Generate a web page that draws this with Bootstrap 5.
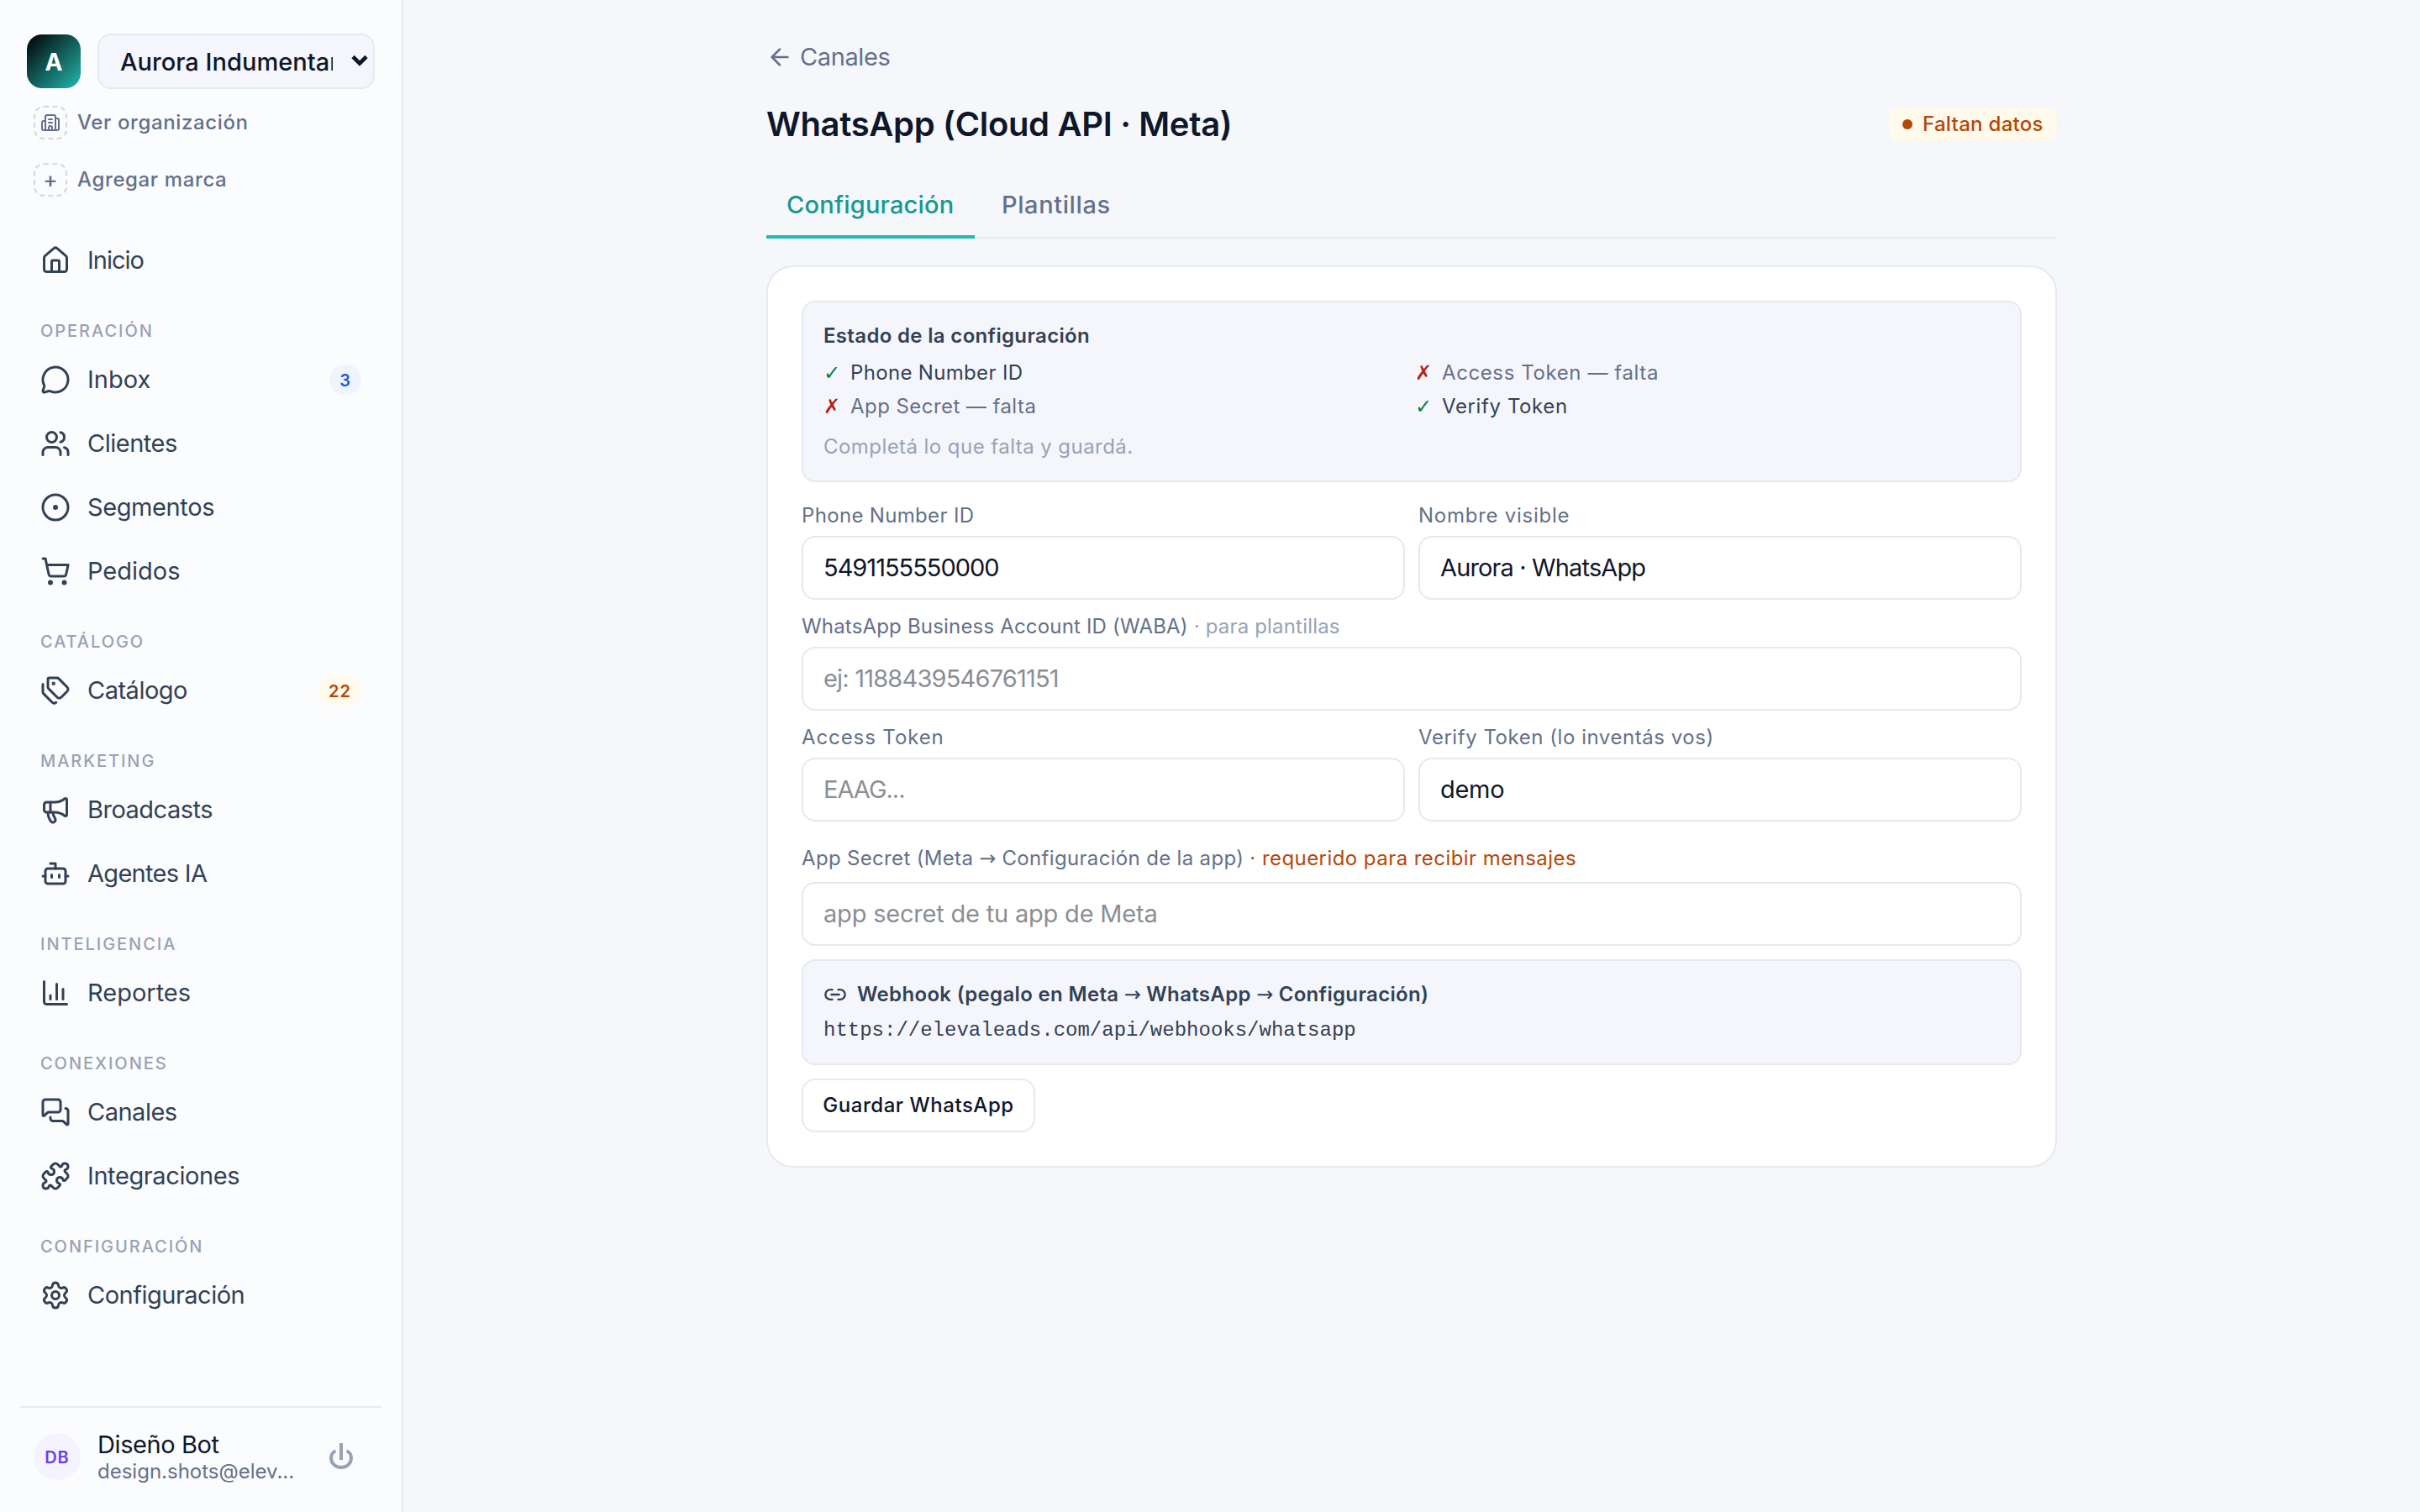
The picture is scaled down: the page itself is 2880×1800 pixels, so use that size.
<!DOCTYPE html>
<html lang="es">
<head>
<meta charset="utf-8">
<title>WhatsApp (Cloud API · Meta)</title>
<link rel="stylesheet" href="https://cdn.jsdelivr.net/npm/bootstrap@5.3.0/dist/css/bootstrap.min.css">
<style>
:root{--ink:#0f172a;--ink2:#334155;--mut:#64708a;--faint:#98a2b5;--line:#e6e9f0;--soft:#f5f6fb}
body{font-family:Inter,"Liberation Sans",sans-serif;font-size:29px;line-height:1.5;color:var(--ink);background:#f5f7fb;height:1800px;overflow:hidden}
svg{fill:none;stroke:currentColor;stroke-width:2;stroke-linecap:round;stroke-linejoin:round;flex:none;display:block}
/* tracking steps */
.tr-n10{letter-spacing:-1px}.tr-n9{letter-spacing:-.86px}.tr-n8{letter-spacing:-.8px}.tr-n7{letter-spacing:-.7px}.tr-n5{letter-spacing:-.5px}.tr-n4{letter-spacing:-.4px}.tr-n3{letter-spacing:-.3px}.tr-n2{letter-spacing:-.2px}
.tr-2{letter-spacing:.18px}.tr-3{letter-spacing:.33px}.tr-4{letter-spacing:.44px}.tr-5{letter-spacing:.54px}.tr-6{letter-spacing:.6px}.tr-7{letter-spacing:.75px}.tr-9{letter-spacing:.9px}
.side{width:480px;height:1800px;background:#fbfcfe;border-right:2px solid var(--line);padding:40px 24px 0}
.brandrow{height:66px;padding:0 8px;gap:20px}
.logo{width:64px;height:64px;border-radius:18px;background:linear-gradient(135deg,#000 0%,#22b8b0 100%);color:#fff;font-weight:700;font-size:28px;padding-top:2px}
.brandsel{width:330px;height:66px;border:2px solid var(--line);border-radius:16px;background:var(--soft);padding-left:25px;font-weight:500}
.brandsel span{width:253px;overflow:hidden;white-space:nowrap;padding-top:2px;letter-spacing:.02px}
.brandsel svg{margin-left:22px;stroke-width:4.6;stroke-linecap:butt;stroke-linejoin:miter;margin-bottom:3px}
.mini{height:68px;padding-left:16px;gap:12px;color:var(--mut);font-size:24px;font-weight:500;letter-spacing:.62px}
.mini i{width:40px;height:40px;border:2px dashed #d2d7e1;border-radius:12px;font-style:normal}
.mini .plus{font-size:26px;letter-spacing:0;line-height:1}
.minis{padding-top:6px;height:166px}
.navi{height:76px;padding:0 24px;gap:20px;color:var(--ink2)}
.sect{height:66px;padding:25px 24px 0;font-size:20px;line-height:42px;font-weight:500;letter-spacing:1.95px;color:var(--faint)}
.cnt{height:36px;border-radius:18px;font-size:20px;font-weight:600;padding:0 12px;letter-spacing:1px;line-height:38px}
.c-blue{background:#eff4ff;color:#1d5bd8}
.c-amb{background:#fffaeb;color:#b54708}
.userbar{height:126px;border-top:2px solid var(--line);padding:0 16px;margin-top:94px}
.ava{width:56px;height:56px;margin-top:30px;border-radius:50%;background:#f5f3ff;color:#6d3bf0;font-size:20px;font-weight:600;letter-spacing:1px;padding-top:2px}
.who{margin:22px 0 0 20px;width:270px;line-height:44px}
.mail{font-size:24px;line-height:32px;margin-top:-6px;color:var(--mut)}
.pwr{margin:41px 0 0 5px;color:#98a2b5;stroke-width:4;stroke-linecap:butt}
.wrapc{width:1536px;margin:0 auto}
.back{height:44px;margin-top:46px;gap:8px;color:var(--mut)}
.ttl{font-size:40px;line-height:60px;font-weight:600;margin:0;letter-spacing:-.34px}
.ttlrow{height:60px;margin-top:28px}
.pill{width:200px;height:40px;border-radius:12px;padding:0 0 0 16px;gap:12px;font-size:24px;font-weight:500;letter-spacing:.3px}
.pill b{width:12px;height:12px;border-radius:50%;background:#b54708}
.tabsx{height:80px;margin-top:26px;border-bottom:2px solid var(--line);gap:8px;font-weight:500;color:var(--mut)}
.tabsx div{height:80px;line-height:80px;padding:0 24px}
.tabsx .on{color:#179890;border-bottom:4px solid #24b8b0;width:248px;letter-spacing:.22px}
.panel{margin-top:32px;height:1074px;background:#fff;border:2px solid var(--line);border-radius:32px;padding:40px}
.boxx{border:2px solid var(--line);border-radius:16px;background:var(--soft);padding:0 24px;font-size:24px;color:var(--ink2)}
.sb{font-weight:600}
.dj{font-family:"DejaVu Sans",sans-serif;letter-spacing:0}
.status{height:216px;padding-top:20px}
.status .l{line-height:40px;height:40px}
.status .g{width:32px;flex:none;font-family:"DejaVu Sans",sans-serif;letter-spacing:0}
.checks{margin-top:4px}
.hint{margin-top:8px;color:var(--faint)}
.cols{display:grid;grid-template-columns:1fr 1fr;column-gap:8px}
.no{color:var(--mut)} .okc{color:#0a8048} .noc{color:#b42318}
.lab{font-size:24px;line-height:36px;color:var(--mut);margin:0;display:block}
.opt{color:var(--faint)} .req{color:#b54708}
.inp{display:block;width:100%;height:76px;border:2px solid var(--line);border-radius:16px;background:#fff;padding:0 24px 2px;font-size:29px;color:var(--ink);font-family:inherit;line-height:40px}
.inp::placeholder{color:#8b8e95;opacity:1}
.pair{display:grid;grid-template-columns:1fr 1fr;column-gap:16px}
.f1{padding-top:22px}.f1 .inp{margin-top:6px}
.f2{padding-top:14px}.f2 .inp{margin-top:6px}
.f3{padding-top:26px}.f3 .inp{margin-top:10px}
.hook{height:126px;margin-top:16px;padding-top:20px}
.hook .hd{gap:12px;line-height:40px;height:40px}
.hook .mono{font-family:"Liberation Mono",monospace;line-height:40px;padding-top:3px}
.save{width:278px;height:64px;margin-top:16px;border:2px solid var(--line);border-radius:16px;background:#fff;font-size:24px;font-weight:500;color:var(--ink);padding:0}
</style>
</head>
<body>
<div class="d-flex">
<aside class="side flex-shrink-0">
  <div class="brandrow d-flex align-items-center">
    <div class="logo d-flex align-items-center justify-content-center">A</div>
    <div class="brandsel d-flex align-items-center"><span>Aurora Indumentaria</span>
      <svg width="20" height="14" viewBox="0 0 20 14"><path d="M2 2.5L10 10.5L18 2.5"/></svg></div>
  </div>
  <div class="minis">
    <div class="mini d-flex align-items-center"><i class="d-flex align-items-center justify-content-center"><svg width="24" height="24" viewBox="0 0 24 24"><path d="M10 12h4M10 8h4M14 21v-3a2 2 0 0 0-4 0v3M6 10H4a2 2 0 0 0-2 2v7a2 2 0 0 0 2 2h16a2 2 0 0 0 2-2V9a2 2 0 0 0-2-2h-2M6 21V5a2 2 0 0 1 2-2h8a2 2 0 0 1 2 2v16"/></svg></i>Ver organización</div>
    <div class="mini d-flex align-items-center"><i class="plus d-flex align-items-center justify-content-center">+</i>Agregar marca</div>
  </div>
  <nav>
    <div class="navi d-flex align-items-center tr-n10"><svg width="36" height="36" viewBox="0 0 24 24"><path d="M15 21v-8a1 1 0 0 0-1-1h-4a1 1 0 0 0-1 1v8"/><path d="M3 10a2 2 0 0 1 .709-1.528l7-5.999a2 2 0 0 1 2.582 0l7 5.999A2 2 0 0 1 21 10v9a2 2 0 0 1-2 2H5a2 2 0 0 1-2-2z"/></svg>Inicio</div>
    <div class="sect">OPERACIÓN</div>
    <div class="navi d-flex align-items-center"><svg width="36" height="36" viewBox="0 0 24 24"><path d="M2.992 16.342a2 2 0 0 1 .094 1.167l-1.065 3.29a1 1 0 0 0 1.236 1.168l3.413-.998a2 2 0 0 1 1.099.092 10 10 0 1 0-4.777-4.719"/></svg>Inbox<span class="cnt c-blue ms-auto">3</span></div>
    <div class="navi d-flex align-items-center tr-n5"><svg width="36" height="36" viewBox="0 0 24 24"><path d="M16 21v-2a4 4 0 0 0-4-4H6a4 4 0 0 0-4 4v2M16 3.128a4 4 0 0 1 0 7.744M22 21v-2a4 4 0 0 0-3-3.87"/><circle cx="9" cy="7" r="4"/></svg>Clientes</div>
    <div class="navi d-flex align-items-center tr-n4"><svg width="36" height="36" viewBox="0 0 24 24"><circle cx="12" cy="12" r="10"/><circle cx="12" cy="12" r="1"/></svg>Segmentos</div>
    <div class="navi d-flex align-items-center"><svg width="36" height="36" viewBox="0 0 24 24"><circle cx="8" cy="21" r="1"/><circle cx="19" cy="21" r="1"/><path d="M2.05 2.05h2l2.66 12.42a2 2 0 0 0 2 1.58h9.78a2 2 0 0 0 1.95-1.57l1.65-7.43H5.12"/></svg>Pedidos</div>
    <div class="sect">CATÁLOGO</div>
    <div class="navi d-flex align-items-center tr-n5"><svg width="36" height="36" viewBox="0 0 24 24"><path d="M13.172 2a2 2 0 0 1 1.414.586l6.71 6.71a2.4 2.4 0 0 1 0 3.408l-4.592 4.592a2.4 2.4 0 0 1-3.408 0l-6.71-6.71A2 2 0 0 1 6 9.172V3a1 1 0 0 1 1-1z"/><path d="M2 7v6.172a2 2 0 0 0 .586 1.414l6.71 6.71a2.4 2.4 0 0 0 3.191.193"/><circle cx="10.5" cy="6.5" r=".5" fill="currentColor"/></svg>Catálogo<span class="cnt c-amb ms-auto">22</span></div>
    <div class="sect">MARKETING</div>
    <div class="navi d-flex align-items-center tr-n5"><svg width="36" height="36" viewBox="0 0 24 24"><path d="M11 6a13 13 0 0 0 8.4-2.8A1 1 0 0 1 21 4v12a1 1 0 0 1-1.6.8A13 13 0 0 0 11 14H5a2 2 0 0 1-2-2V8a2 2 0 0 1 2-2z"/><path d="M6 14a12 12 0 0 0 2.4 7.2 2 2 0 0 0 3.2-2.4A8 8 0 0 1 10 14M8 6v8"/></svg>Broadcasts</div>
    <div class="navi d-flex align-items-center tr-n7"><svg width="36" height="36" viewBox="0 0 24 24"><path d="M12 8V4H8M2 14h2M20 14h2M15 13v2M9 13v2"/><rect x="4" y="8" width="16" height="12" rx="2"/></svg>Agentes IA</div>
    <div class="sect">INTELIGENCIA</div>
    <div class="navi d-flex align-items-center"><svg width="36" height="36" viewBox="0 0 24 24"><path d="M3 3v16a2 2 0 0 0 2 2h16M18 17V9M13 17V5M8 17v-3"/></svg>Reportes</div>
    <div class="sect">CONEXIONES</div>
    <div class="navi d-flex align-items-center tr-n5"><svg width="36" height="36" viewBox="0 0 24 24"><path d="M16 10a2 2 0 0 1-2 2H6.828a2 2 0 0 0-1.414.586l-2.202 2.202A.71.71 0 0 1 2 14.286V4a2 2 0 0 1 2-2h10a2 2 0 0 1 2 2z"/><path d="M20 9a2 2 0 0 1 2 2v10.286a.71.71 0 0 1-1.212.502l-2.202-2.202A2 2 0 0 0 17.172 19H10a2 2 0 0 1-2-2v-1"/></svg>Canales</div>
    <div class="navi d-flex align-items-center tr-n4"><svg width="36" height="36" viewBox="0 0 24 24"><path d="M15.39 4.39a1 1 0 0 0 1.68-.474 2.5 2.5 0 1 1 3.014 3.015 1 1 0 0 0-.474 1.68l1.683 1.682a2.414 2.414 0 0 1 0 3.414L19.61 15.39a1 1 0 0 1-1.68-.474 2.5 2.5 0 1 0-3.014 3.015 1 1 0 0 1 .474 1.68l-1.683 1.682a2.414 2.414 0 0 1-3.414 0L8.61 19.61a1 1 0 0 0-1.68.474 2.5 2.5 0 1 1-3.014-3.015 1 1 0 0 0 .474-1.68l-1.683-1.682a2.414 2.414 0 0 1 0-3.414L4.39 8.61a1 1 0 0 1 1.68.474 2.5 2.5 0 1 0 3.014-3.015 1 1 0 0 1-.474-1.68l1.683-1.682a2.414 2.414 0 0 1 3.414 0z"/></svg>Integraciones</div>
    <div class="sect">CONFIGURACIÓN</div>
    <div class="navi d-flex align-items-center tr-n5"><svg width="36" height="36" viewBox="0 0 24 24"><path d="M9.671 4.136a2.34 2.34 0 0 1 4.659 0 2.34 2.34 0 0 0 3.319 1.915 2.34 2.34 0 0 1 2.33 4.033 2.34 2.34 0 0 0 0 3.831 2.34 2.34 0 0 1-2.33 4.033 2.34 2.34 0 0 0-3.319 1.915 2.34 2.34 0 0 1-4.659 0 2.34 2.34 0 0 0-3.32-1.915 2.34 2.34 0 0 1-2.33-4.033 2.34 2.34 0 0 0 0-3.831A2.34 2.34 0 0 1 6.35 6.051a2.34 2.34 0 0 0 3.319-1.915"/><circle cx="12" cy="12" r="3"/></svg>Configuración</div>
  </nav>
  <div class="userbar d-flex">
    <div class="ava d-flex align-items-center justify-content-center flex-shrink-0">DB</div>
    <div class="who"><div class="tr-n4">Diseño Bot</div><div class="mail text-nowrap">design.shots@elev...</div></div>
    <svg class="pwr" width="30" height="34" viewBox="0 0 30 34"><path d="M15 1v20M8.500 10.500C5 11.500 3 15 3 18.500C3 25 8 30 15 30S27 25 27 18.500C27 15 25 11.500 21.500 10.500"/></svg>
  </div>
</aside>
<main class="flex-grow-1">
  <div class="wrapc">
    <div class="back d-flex align-items-center tr-n4"><svg width="32" height="32" viewBox="0 0 24 24"><path d="m12 19-7-7 7-7M19 12H5"/></svg>Canales</div>
    <div class="ttlrow d-flex align-items-center justify-content-between">
      <h1 class="ttl">WhatsApp (Cloud API · Meta)</h1>
      <div class="pill c-amb d-flex align-items-center"><b></b>Faltan datos</div>
    </div>
    <div class="tabsx d-flex"><div class="on">Configuración</div><div class="tr-6">Plantillas</div></div>
    <section class="panel">
      <div class="boxx status">
        <div class="l sb tr-3">Estado de la configuración</div>
        <div class="cols checks">
          <div class="l d-flex tr-3"><span class="g okc">✓</span>Phone Number ID</div>
          <div class="l d-flex no tr-6"><span class="g noc">✗</span>Access Token — falta</div>
          <div class="l d-flex no tr-4"><span class="g noc">✗</span>App Secret — falta</div>
          <div class="l d-flex tr-6"><span class="g okc">✓</span>Verify Token</div>
        </div>
        <div class="l hint tr-4">Completá lo que falta y guardá.</div>
      </div>
      <div class="pair f1">
        <div><label class="lab tr-3">Phone Number ID</label><input class="inp tr-n10" value="5491155550000"></div>
        <div><label class="lab tr-7">Nombre visible</label><input class="inp tr-n9" value="Aurora · WhatsApp"></div>
      </div>
      <div class="f2"><label class="lab tr-2">WhatsApp Business Account ID (WABA) <span class="opt">· para plantillas</span></label><input class="inp tr-n8" placeholder="ej: 1188439546761151"></div>
      <div class="pair f2">
        <div><label class="lab tr-9">Access Token</label><input class="inp tr-n10" placeholder="EAAG..."></div>
        <div><label class="lab tr-5">Verify Token (lo inventás vos)</label><input class="inp tr-n3" value="demo"></div>
      </div>
      <div class="f3"><label class="lab tr-3">App Secret (Meta <span class="dj">→</span> Configuración de la app) <span class="req tr-4">· requerido para recibir mensajes</span></label><input class="inp tr-n2" placeholder="app secret de tu app de Meta"></div>
      <div class="boxx hook">
        <div class="hd d-flex align-items-center sb tr-3"><svg width="28" height="28" viewBox="0 0 24 24"><path d="M9 17H7A5 5 0 0 1 7 7h2M15 7h2a5 5 0 1 1 0 10h-2M8 12h8"/></svg><span>Webhook (pegalo en Meta <span class="dj fw-normal">→</span> WhatsApp <span class="dj fw-normal">→</span> Configuración)</span></div>
        <div class="mono">https://elevaleads.com/api/webhooks/whatsapp</div>
      </div>
      <button class="save d-block tr-5">Guardar WhatsApp</button>
    </section>
  </div>
</main>
</div>
<script src="https://cdn.jsdelivr.net/npm/bootstrap@5.3.0/dist/js/bootstrap.bundle.min.js"></script>
</body>
</html>
